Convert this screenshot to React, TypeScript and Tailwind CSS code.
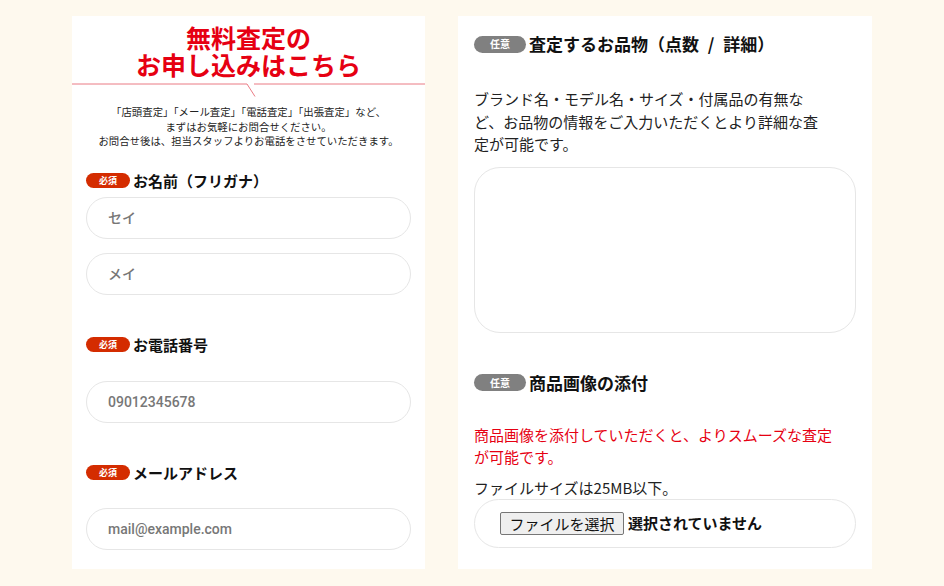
import React from "react";

const jp = "font-['Noto_Sans_CJK_JP',sans-serif]";

function Required() {
  return (
    <span className="flex h-[15px] w-[44px] shrink-0 items-center justify-center rounded-full bg-[#d42c00] text-[9px] font-bold leading-none text-white">
      必須
    </span>
  );
}

function Optional() {
  return (
    <span className="flex h-[17px] w-[52px] shrink-0 items-center justify-center rounded-full bg-[#808080] text-[10px] font-bold leading-none text-white">
      任意
    </span>
  );
}

function Field({ placeholder, className = "" }: { placeholder: string; className?: string }) {
  return (
    <input
      type="text"
      placeholder={placeholder}
      className={`block h-[42px] w-full rounded-full border border-[#e6e6e6] bg-white px-[21px] font-['Roboto','Noto_Sans_CJK_JP',sans-serif] text-[14px] font-medium text-[#333] outline-none placeholder:text-[#777] ${className}`}
    />
  );
}

function Label({ children, className = "" }: { children: React.ReactNode; className?: string }) {
  return (
    <div className={`flex h-[22px] items-center gap-[3px] ${className}`}>
      <Required />
      <span className="text-[15px] font-bold leading-[22px] text-[#111]">{children}</span>
    </div>
  );
}

export default function App() {
  return (
    <main className={`${jp} flex min-h-[586px] w-[944px] items-start justify-between bg-[#fef9ee] px-[72px] pt-[16px]`}>
      {/* left: contact form */}
      <section className="w-[353px] bg-white pb-[19px] pt-[8px]">
        <h2 className="text-center text-[25px] font-bold leading-[27px] text-[#e60012]">
          無料査定の
          <br />
          お申し込みはこちら
        </h2>
        <svg className="mt-[5px] block" width="353" height="14" viewBox="0 0 353 14">
          <polyline points="0,1 175,1 183,13.5" fill="none" stroke="#ea7b84" strokeWidth="1" />
          <line x1="182" y1="1" x2="353" y2="1" stroke="#ea7b84" strokeWidth="1" />
        </svg>
        <p className="mt-[8px] text-center text-[10.4px] leading-[14.5px] text-[#222]">
          「店頭査定」「メール査定」「電話査定」「出張査定」など、
          <br />
          まずはお気軽にお問合せください。
          <br />
          お問合せ後は、担当スタッフよりお電話をさせていただきます。
        </p>

        <div className="px-[14px]">
          <Label className="mt-[21px]">お名前（フリガナ）</Label>
          <Field placeholder="セイ" className="mt-[5px]" />
          <Field placeholder="メイ" className="mt-[14px]" />

          <Label className="mt-[39px]">お電話番号</Label>
          <Field placeholder="09012345678" className="mt-[25px]" />

          <Label className="mt-[39px]">メールアドレス</Label>
          <Field placeholder="mail@example.com" className="mt-[24px]" />
        </div>
      </section>

      {/* right: item details */}
      <section className="w-[414px] bg-white px-[16px] pb-[21px] pt-[16px]">
        <div className="flex h-[24px] items-center gap-[3px]">
          <Optional />
          <h3 className="text-[17px] font-bold leading-[24px] text-[#111]">
            査定するお品物（点数 <span className="mx-[5px]">/</span> 詳細）
          </h3>
        </div>
        <p className="mt-[32px] text-[15px] leading-[22.5px] text-[#222]">
          ブランド名・モデル名・サイズ・付属品の有無な
          <br />
          ど、お品物の情報をご入力いただくとより詳細な査
          <br />
          定が可能です。
        </p>
        <textarea className="mt-[11px] block h-[166px] w-full resize-none rounded-[26px] border border-[#e6e6e6] bg-white p-4 outline-none" />

        <div className="mt-[38px] flex h-[24px] items-center gap-[3px]">
          <Optional />
          <h3 className="text-[17px] font-bold leading-[24px] text-[#111]">商品画像の添付</h3>
        </div>
        <p className="mt-[29px] text-[15px] leading-[22.5px] text-[#e60012]">
          商品画像を添付していただくと、よりスムーズな査定
          <br />
          が可能です。
        </p>
        <p className="mt-[8px] text-[15px] leading-[22.5px] text-[#222]">ファイルサイズは25MB以下。</p>
        <div className="flex h-[49px] items-center rounded-full border border-[#e6e6e6] pl-[25px]">
          <button
            type="button"
            className="h-[23px] w-[124px] rounded-[2px] border border-[#767676] bg-[#efefef] text-[15px] leading-[21px] text-[#111]"
          >
            ファイルを選択
          </button>
          <span className="ml-[4px] text-[15px] font-bold text-[#111]">選択されていません</span>
        </div>
      </section>
    </main>
  );
}
